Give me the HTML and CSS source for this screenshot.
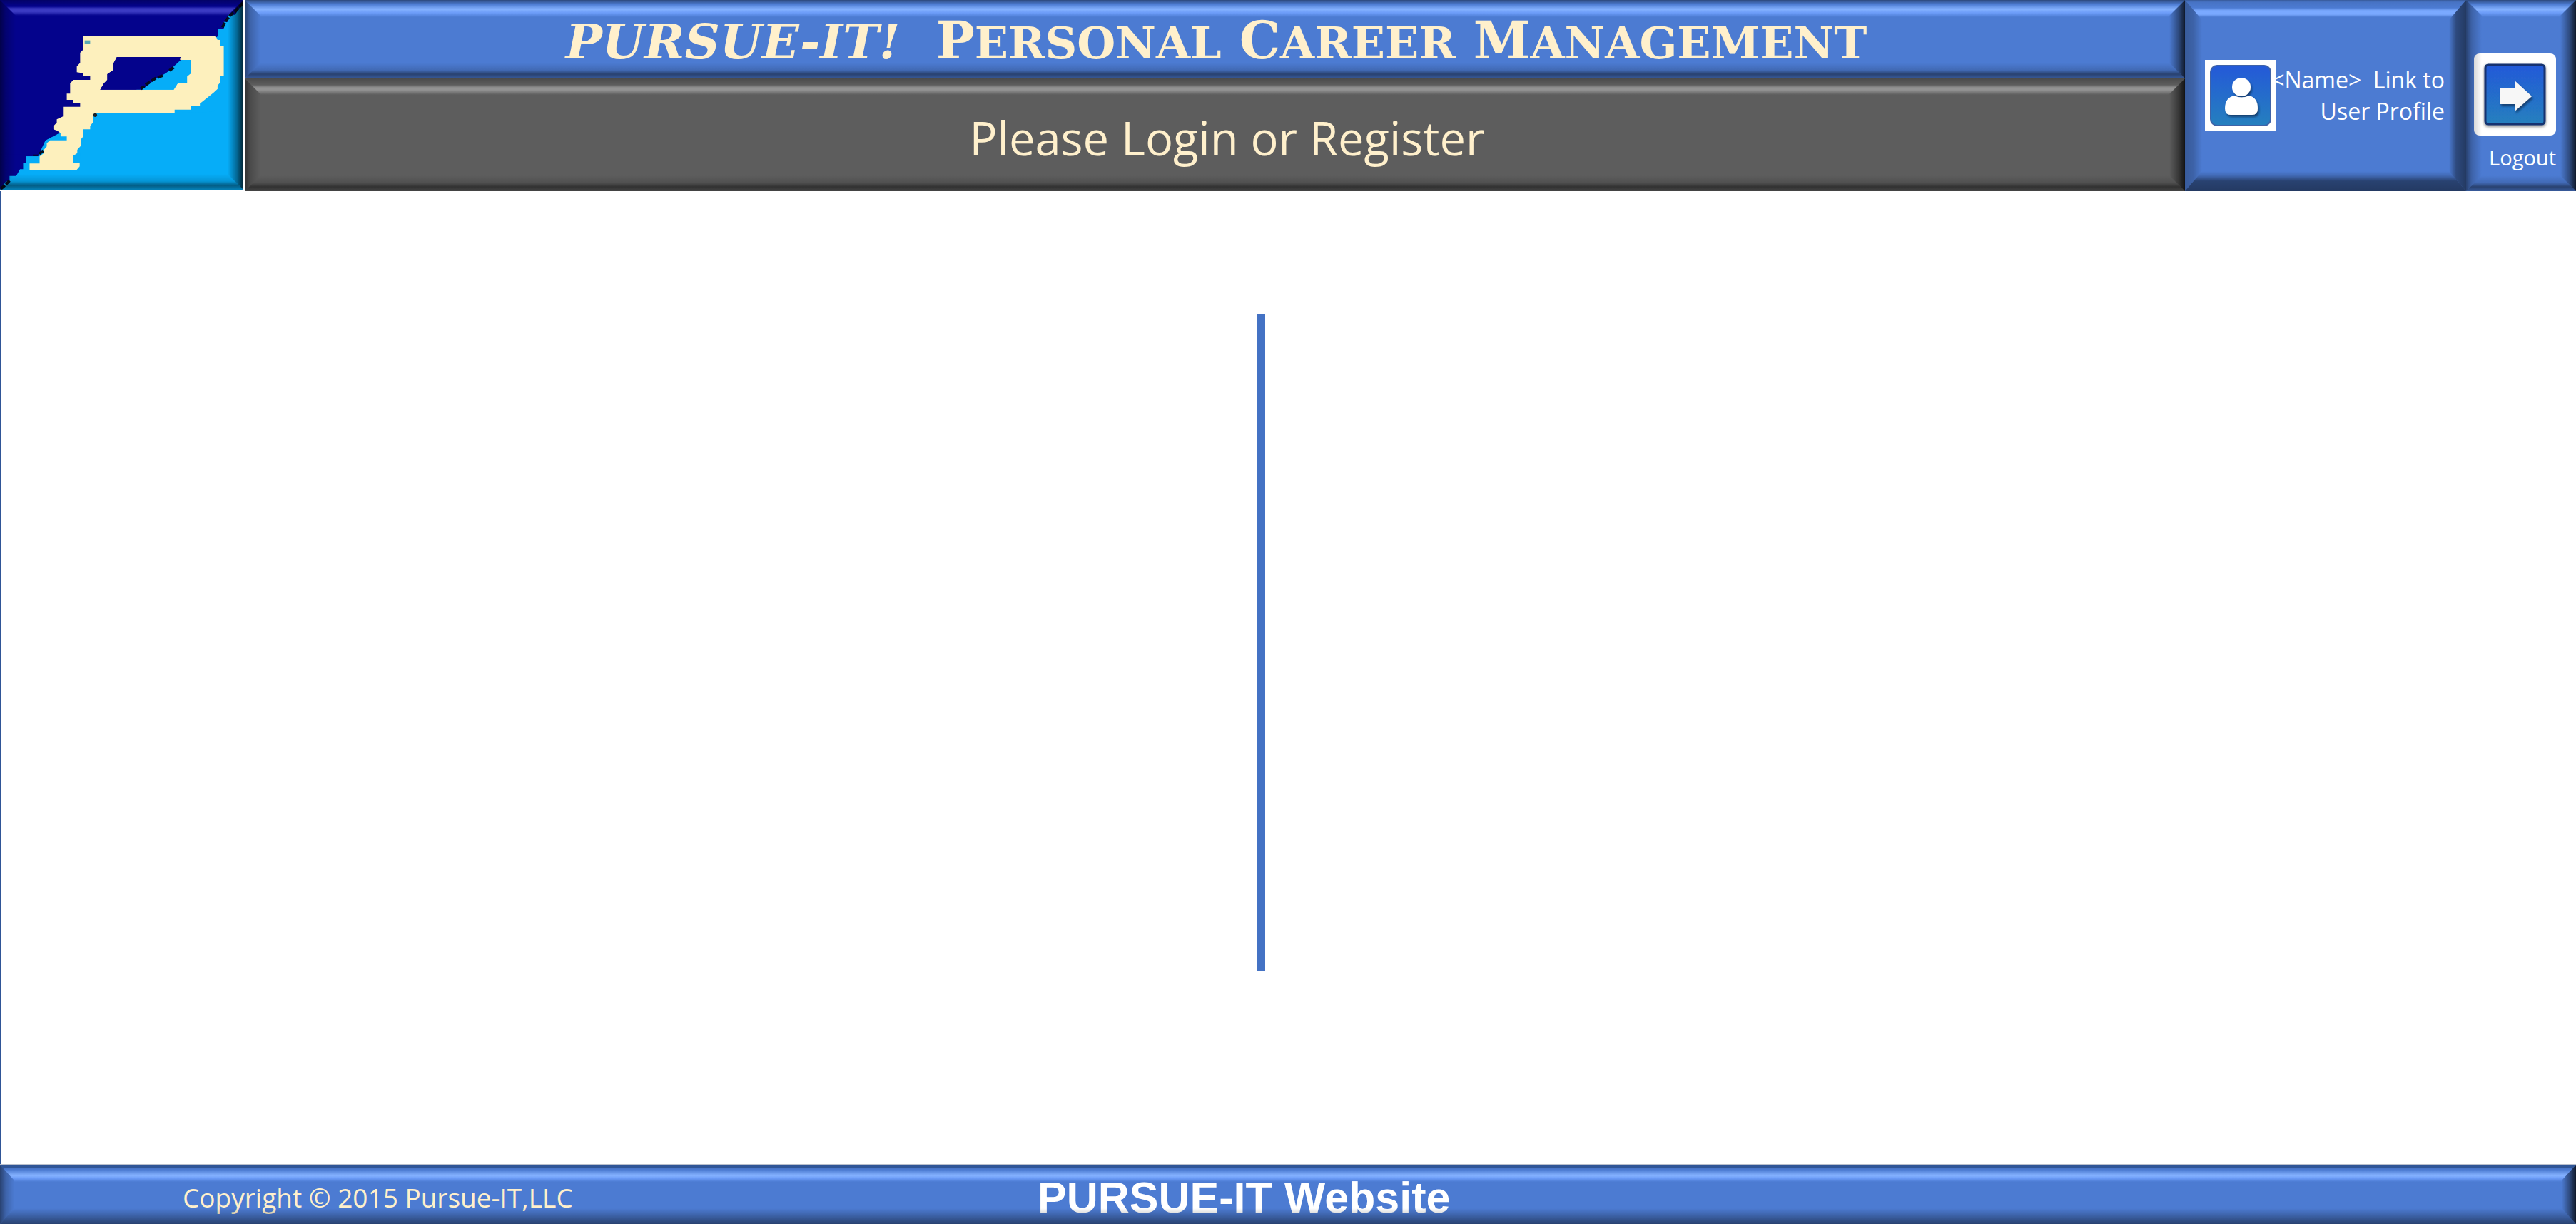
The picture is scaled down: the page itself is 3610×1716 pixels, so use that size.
FILE: index.html
```html
<!DOCTYPE html>
<html lang="en">
<head>
<meta charset="utf-8">
<title>Pursue-IT! Personal Career Management</title>
<link rel="stylesheet" href="styles.css">
</head>
<body>
<header class="header">
  <a class="logo bevel" href="#" aria-label="Pursue-IT home">
    <svg viewBox="0 0 1020 798" preserveAspectRatio="none" aria-hidden="true">
      <rect width="1020" height="798" fill="#04038c"/>
      <path fill="#06adf8" d="M1020 10L985 62H955V92H938V120H912V155L640 360L400 480L190 590L160 658H110V686H97V712H84L68 740H40V762H26L0 798H1020Z"/>
      <path fill="none" stroke="#050d20" stroke-width="12" stroke-dasharray="22 6" d="M1018 14L984 50L965 64L945 90L930 120M182 634L160 650H138M40 760L22 778L4 794"/>
      <path fill="#04038c" d="M912 153L640 360L400 480L190 590L160 650L0 650V100H912Z"/>
      <path fill="#06adf8" d="M912 153L900 470L399 484L340 620L330 720L124 712L110 658H166L399 480L700 300Z"/>
      <path fill="#fdf0bd" fill-rule="evenodd" d="M350 153H905L912 168H924V195H938V320H924V346L912 360V374L895 390L838 436V446H800V461H732V476H406L390 490V514L378 530V544H350V572L338 588V614L324 630V644L308 655V686H334V700L322 714H124V688H166V658L184 644V630L196 616V602L210 590H280V574H254V560L240 550L224 544V530L238 516V502L264 490V449H336V434H308V420H280V394H294V350L308 336H378V321H350V308L322 304V280L336 264V222L350 208ZM490 240L476 266V294L450 312V336L436 350L420 377H728L745 350H784V322L800 308V252H755V240Z"/>
      <path fill="#04038c" d="M490 240H758L750 254L720 290L596 377H420L436 350L450 336V312L476 294V266Z"/>
      <path fill="#06adf8" d="M758 252H800V308L784 322V350H745L728 377H596L650 334L700 306Z"/>
      <path fill="none" stroke="#050d20" stroke-width="12" stroke-dasharray="22 8" d="M728 284L705 300M682 318L650 330L612 356L590 374"/>
      <circle cx="399" cy="484" r="8" fill="#17202a"/>
      <path fill="#59a9b4" d="M355 170H378V184H355Z"/>
    </svg>
  </a>
  <div class="titles">
    <h1 class="brand bevel">
      <span class="brand-text"><em>PURSUE-IT!</em><span>P<small>ERSONAL</small> C<small>AREER</small> M<small>ANAGEMENT</small></span></span>
    </h1>
    <h2 class="page-title bevel"><span>Please Login or Register</span></h2>
  </div>
  <a class="profile bevel" href="#">
    <svg class="profile-icon" viewBox="0 0 100 100" aria-hidden="true">
      <defs>
        <linearGradient id="tile" x1="0" y1="0" x2="0" y2="1">
          <stop offset="0" stop-color="#2459d8"/>
          <stop offset="1" stop-color="#2580be"/>
        </linearGradient>
        <filter id="soft" x="-20%" y="-20%" width="150%" height="150%">
          <feDropShadow dx="2" dy="3" stdDeviation="1.5" flood-color="#08305c" flood-opacity=".75"/>
        </filter>
      </defs>
      <rect width="100" height="100" fill="#fff"/>
      <rect x="8" y="8" width="84" height="84" rx="9" fill="url(#tile)" stroke="#3f63a8" stroke-width="2"/>
      <g fill="#fff" filter="url(#soft)">
        <circle cx="51" cy="38" r="13"/>
        <path d="M41 50Q51 55 62 50Q74 53 74 68Q74 77 66 77H36Q28 77 28 68Q28 53 41 50Z"/>
      </g>
    </svg>
    <span class="profile-text">&lt;Name&gt;&nbsp; Link to<br>User Profile</span>
  </a>
  <a class="logout bevel" href="#">
    <svg class="logout-icon" viewBox="0 0 115 115" aria-hidden="true">
      <defs>
        <filter id="glow" x="-20%" y="-20%" width="140%" height="140%">
          <feDropShadow dx="0" dy="2" stdDeviation="2" flood-color="#000" flood-opacity=".5"/>
        </filter>
      </defs>
      <rect width="115" height="115" rx="8" fill="#fff"/>
      <rect x="16" y="16" width="83" height="83" rx="4" fill="url(#tile)" stroke="#12336f" stroke-width="3" filter="url(#glow)"/>
      <path filter="url(#soft)" fill="#f7f7f7" d="M36 48H57V38L81 60L57 81V71H36Z"/>
    </svg>
    <span>Logout</span>
  </a>
</header>
<main class="main">
  <section class="pane" aria-label="Login"></section>
  <div class="divider"></div>
  <section class="pane" aria-label="Register"></section>
</main>
<footer class="footer bevel">
  <span class="copyright">Copyright © 2015 Pursue-IT,LLC</span>
  <a class="site" href="#">PURSUE-IT Website</a>
</footer>
</body>
</html>
```
FILE: styles.css
```css
* {
  box-sizing: border-box;
}

body {
  margin: 0;
  min-height: 100vh;
  display: flex;
  flex-direction: column;
  background: #fff;
  color: #fff;
  font-family: "Open Sans", sans-serif;
}

a {
  color: inherit;
  text-decoration: none;
}

/* Raised panel: one layer paints the top and bottom edges, the other the sides */
.bevel {
  --x: 22px;
  --y: 22px;
  --top: linear-gradient(#0006, #0001 5px, #6c9cf800 6px, #85b2ff 13px, #6c9cf8 18px, #6c9cf800 24px);
  --bottom: linear-gradient(#0000, #0002 10px, #0007 16px, #0004 22px);
  position: relative;
  background: #4c7bd2;
}

.bevel::before,
.bevel::after {
  content: "";
  position: absolute;
  inset: 0;
  pointer-events: none;
}

.bevel::before {
  background: var(--top) top / 100% 24px no-repeat, var(--bottom) bottom / 100% var(--y) no-repeat;
  clip-path: polygon(0 0, 100% 0, calc(100% - var(--x)) var(--y), calc(100% - var(--x)) calc(100% - var(--y)), 100% 100%, 0 100%, var(--x) calc(100% - var(--y)), var(--x) var(--y));
}

.bevel::after {
  background: linear-gradient(90deg, #0007, #0003 8px, #0000) left / var(--x) 100% no-repeat, linear-gradient(270deg, #000c, #0006 9px, #0000) right / var(--x) 100% no-repeat;
  clip-path: polygon(0 0, var(--x) var(--y), calc(100% - var(--x)) var(--y), 100% 0, 100% 100%, calc(100% - var(--x)) calc(100% - var(--y)), var(--x) calc(100% - var(--y)), 0 100%);
}

.header {
  display: grid;
  grid-template-columns: 343px 1fr 394px 154px;
  background: #2a4a80;
}

.logo {
  --top: linear-gradient(#0004, #0000 9px, #7878ff70 12px, #7878ff80 16px, #7878ff00 22px);
  background: none;
  margin: 0 2px 2px 0;
  outline: 2px solid #fff;
}

.logo svg {
  display: block;
  width: 341px;
  height: 266px;
}

.titles {
  display: flex;
  flex-direction: column;
  background: #5d5d5d;
  position: relative;
}

.brand,
.page-title {
  margin: 0;
  display: flex;
  align-items: center;
  justify-content: center;
  color: #fff0cc;
}

.brand {
  height: 110px;
  padding: 8px 0 0 4px;
  font: bold 72px/80px "DejaVu Serif", serif;
}

.brand-text {
  display: flex;
  align-items: baseline;
  gap: 50px;
  white-space: nowrap;
}

.brand em {
  font-size: 68px;
}

.brand small {
  font-size: 62px;
}

.page-title {
  --top: linear-gradient(#0003, #0000 9px, #fff5 13px, #fff5 16px, #fff0 23px);
  height: 158px;
  padding: 8px 0 0 34px;
  background: #5d5d5d;
  font-weight: 400;
  font-size: 65px;
  line-height: 88px;
}

.profile {
  --x: 24px;
  --y: 28px;
  --top: linear-gradient(#0004, #0001 3px, #6c9cf800 11px, #7aa9ff 15px, #7aa9ff 20px, #6c9cf800 24px);
  --bottom: linear-gradient(#0000, #0002 6px, #0007 14px, #0008);
  display: flex;
  align-items: center;
  padding: 0 30px 0 28px;
}

.profile::after {
  background: linear-gradient(90deg, #0004, #0003 12px, #0000) left / 24px 100% no-repeat, linear-gradient(270deg, #0008, #0006 14px, #0000) right / 24px 100% no-repeat;
}

.profile-icon {
  flex: none;
  width: 100px;
  height: 100px;
  position: relative;
  z-index: 1;
}

.profile-text {
  flex: 1;
  margin-left: -8px;
  font-size: 32px;
  line-height: 44px;
  text-align: right;
  white-space: nowrap;
}

.logout {
  display: flex;
  flex-direction: column;
  align-items: flex-end;
  gap: 12px;
  padding: 75px 28px 0 0;
  font-size: 29px;
  line-height: 38px;
}

.logout-icon {
  width: 115px;
  height: 115px;
}

.main {
  flex: 1;
  display: grid;
  grid-template-columns: 4893fr 11px 5107fr;
  padding: 172px 0 271px;
  border-left: 2px solid #2f5597;
}

.divider {
  background: #4472c4;
}

.footer {
  --x: 20px;
  --top: linear-gradient(#2f5597 4px, #0001 5px, #6c9cf800 7px, #85b2ff 15px, #6c9cf8 19px, #6c9cf800 24px);
  --bottom: linear-gradient(#0000, #0003 10px, #0007);
  height: 84px;
  border-top: 1px solid #b8bfcc;
  display: grid;
  grid-template-columns: 1454fr 2156fr;
  align-items: center;
  padding-top: 8px;
}

.copyright {
  padding-left: 256px;
  color: #fff0cc;
  font-size: 37px;
  line-height: 50px;
}

.site {
  font: bold 61px/68px "Liberation Sans", Arial, sans-serif;
}
```
